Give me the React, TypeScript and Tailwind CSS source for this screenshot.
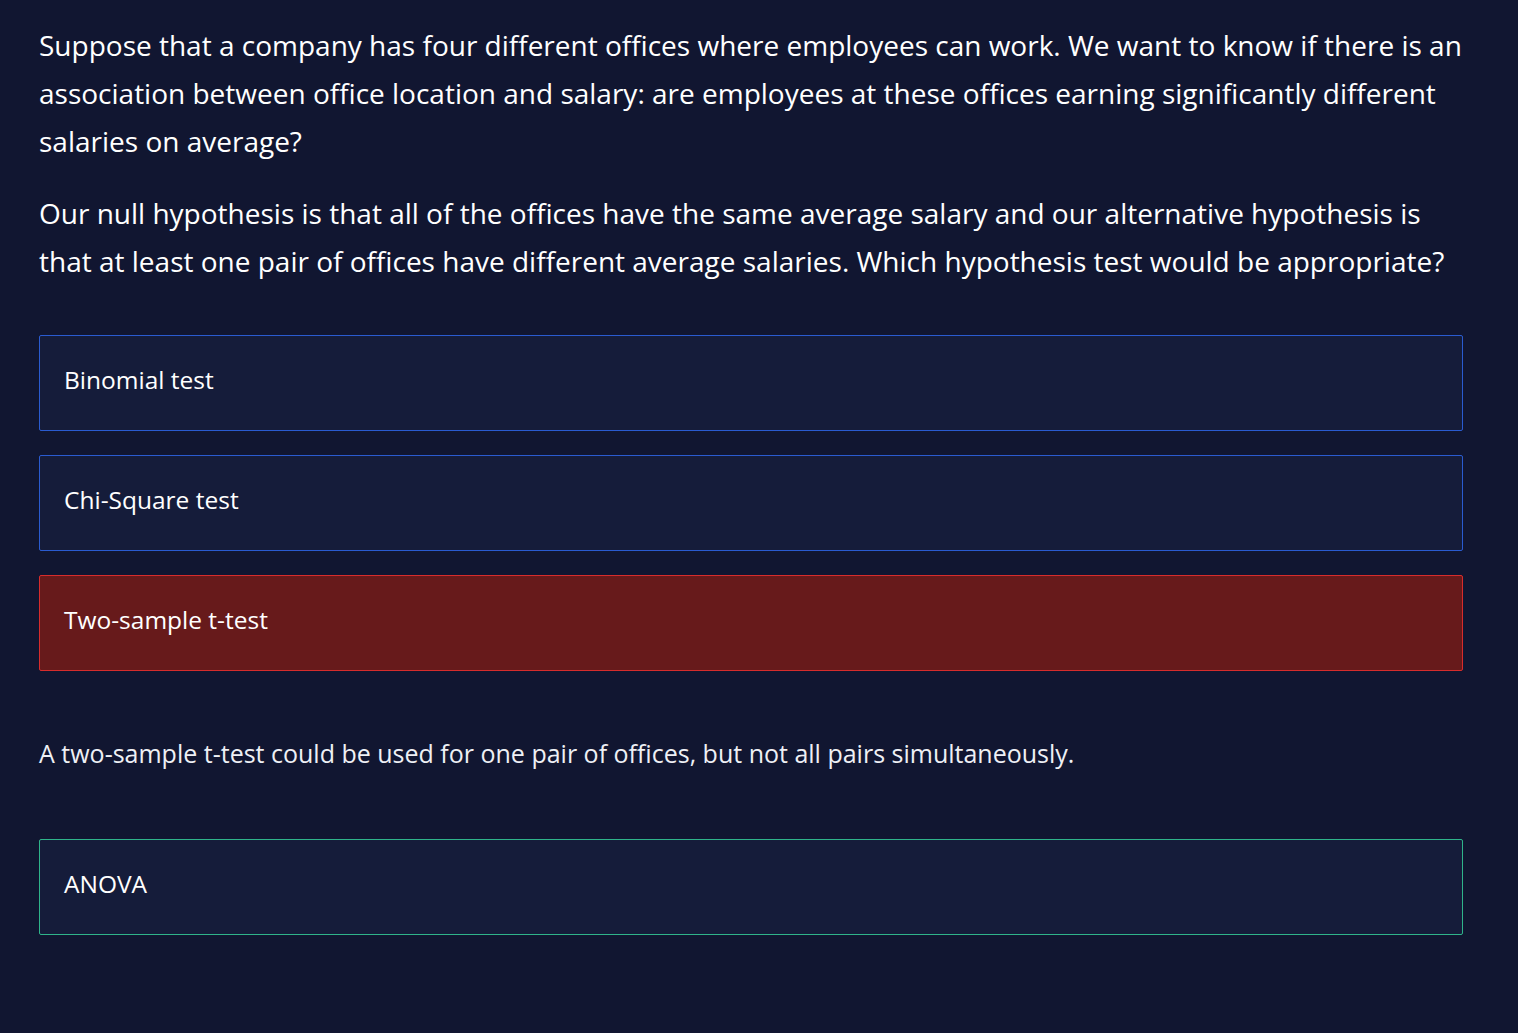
const options = [
  { label: "Binomial test", state: "idle" },
  { label: "Chi-Square test", state: "idle" },
  { label: "Two-sample t-test", state: "wrong" },
];

function Option({ label, state }: { label: string; state: string }) {
  const tone =
    state === "wrong"
      ? "bg-[#671a1b] border-[#d72c2c]"
      : state === "right"
        ? "bg-[#151c3a] border-[#2fb48a]"
        : "bg-[#151c3a] border-[#2a5bd0]";
  return (
    <div className={`flex h-[96px] items-center rounded-[2px] border px-6 pb-1.5 text-[24.5px] text-white ${tone}`}>
      {label}
    </div>
  );
}

export default function App() {
  return (
    <div className="min-h-[1033px] bg-[#111631] px-[39px] pt-[21px] font-['Open_Sans',sans-serif] text-white">
      <div className="w-[1424px]">
        <p className="text-[28px] leading-[48px]">
          Suppose that a company has four different offices where employees can work. We want to know if there is an
          association between office location and salary: are employees at these offices earning significantly
          different salaries on average?
        </p>
        <p className="mt-6 text-[28px] leading-[48px]">
          Our null hypothesis is that all of the offices have the same average salary and our alternative hypothesis
          is that at least one pair of offices have different average salaries. Which hypothesis test would be
          appropriate?
        </p>
        <div className="mt-[50px] flex flex-col gap-6">
          {options.map((o) => (
            <Option key={o.label} {...o} />
          ))}
        </div>
        <p className="mt-[66px] text-[25px] leading-[32px] text-[#eef0f5]">
          A two-sample t-test could be used for one pair of offices, but not all pairs simultaneously.
        </p>
        <div className="mt-[70px]">
          <Option label="ANOVA" state="right" />
        </div>
      </div>
    </div>
  );
}
